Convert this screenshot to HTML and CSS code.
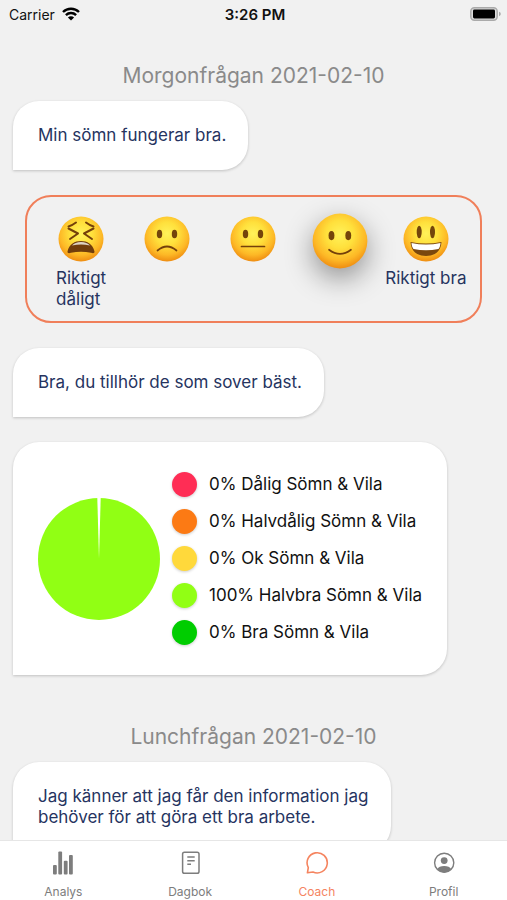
FILE: index.html
```html
<!DOCTYPE html>
<html lang="sv">
	<head>
		<meta charset="UTF-8">
		<meta name="viewport" content="width=device-width, initial-scale=1">
		<title>Coach</title>
		<link rel="stylesheet" href="styles.css">
	</head>
	<body>
		<!-- shared gradient for the faces -->
		<svg class="defs" width="0" height="0" aria-hidden="true">
			<defs>
				<radialGradient id="skin" cx="50%" cy="38%" r="63%">
					<stop offset="0" stop-color="#fff25a" />
					<stop offset=".4" stop-color="#ffe03c" />
					<stop offset=".75" stop-color="#fdb826" />
					<stop offset="1" stop-color="#ee8a10" />
				</radialGradient>
			</defs>
		</svg>
		<header class="status">
			<div class="carrier">
				<span>Carrier</span>
				<svg width="18" height="14" viewBox="0 0 18 14" fill="none" stroke="#000" stroke-width="2.4">
					<path d="M1 5A11.4 11.4 0 0 1 17 5" />
					<path d="M3.9 8.1A7.3 7.3 0 0 1 14.1 8.1" />
					<path d="M9 13.6L5.9 10.5A4.4 4.4 0 0 1 12.1 10.5Z" fill="#000" stroke="none" />
				</svg>
			</div>
			<time>3:26 PM</time>
			<svg class="battery" width="31" height="14" viewBox="0 0 31 14">
				<rect x=".8" y=".8" width="26.4" height="12.4" rx="3.6" fill="#ddd" stroke="#aaa" stroke-width="1.5" />
				<rect x="3" y="2.6" width="22" height="8.8" rx="1.4" fill="#000" />
				<path d="M29 4.8Q30.8 5.4 30.8 7T29 9.2Z" fill="#aaa" />
			</svg>
		</header>
		<main class="feed">
			<section class="group">
				<h2>Morgonfrågan 2021-02-10</h2>
				<p class="bubble">Min sömn fungerar bra.</p>
				<div class="scale">
					<button type="button">
						<svg class="face" viewBox="0 0 46 46">
							<circle cx="23" cy="23" r="22.5" fill="url(#skin)" />
							<g fill="none" stroke="#74400a" stroke-width="2" stroke-linecap="round" stroke-linejoin="round">
								<path d="M10.5 10.5Q14 9.5 18 6.5" />
								<path d="M35.5 10.5Q32 9.5 28 6.5" />
								<path d="M10.5 12.5L20 17.5L12 23" />
								<path d="M35.5 12.5L26 17.5L34 23" />
							</g>
							<path d="M9.5 35.5C11 28 17 25 23 25S35 28 36.5 35.5C36.7 37.4 35 37.4 33 36.8Q23 34.5 13 36.8C11 37.4 9.3 37.4 9.5 35.5Z" fill="#713d0c" />
							<path d="M14 29.5Q17 26 23 26T32 29.5Q23 27.5 14 29.5Z" fill="#ddd3c4" />
						</svg>
						<span>Riktigt<br>dåligt</span>
					</button>
					<button type="button" aria-label="Dåligt">
						<svg class="face" viewBox="0 0 46 46">
							<circle cx="23" cy="23" r="22.5" fill="url(#skin)" />
							<ellipse cx="15.5" cy="18" rx="2.7" ry="4.3" fill="#74450b" />
							<ellipse cx="30.5" cy="18" rx="2.7" ry="4.3" fill="#74450b" />
							<path d="M13.5 34.5Q23 26.5 32.5 34.5" fill="none" stroke="#74400a" stroke-width="1.7" stroke-linecap="round" />
						</svg>
					</button>
					<button type="button" aria-label="Ok">
						<svg class="face" viewBox="0 0 46 46">
							<circle cx="23" cy="23" r="22.5" fill="url(#skin)" />
							<ellipse cx="15.5" cy="18" rx="2.7" ry="4.3" fill="#74450b" />
							<ellipse cx="30.5" cy="18" rx="2.7" ry="4.3" fill="#74450b" />
							<path d="M11.5 30.5H34.5" fill="none" stroke="#74400a" stroke-width="1.7" stroke-linecap="round" />
						</svg>
					</button>
					<button type="button" class="selected" aria-label="Bra" aria-pressed="true">
						<svg class="face" viewBox="0 0 46 46">
							<circle cx="23" cy="23" r="22.5" fill="url(#skin)" />
							<ellipse cx="16" cy="18.5" rx="2.4" ry="3.8" fill="#74450b" />
							<ellipse cx="29.8" cy="18.5" rx="2.4" ry="3.8" fill="#74450b" />
							<path d="M14 30.2Q23 37 32 30.2" fill="none" stroke="#74400a" stroke-width="1.4" stroke-linecap="round" />
						</svg>
					</button>
					<button type="button">
						<svg class="face" viewBox="0 0 46 46">
							<circle cx="23" cy="23" r="22.5" fill="url(#skin)" />
							<ellipse cx="16.2" cy="16" rx="2.5" ry="6.3" fill="#74450b" />
							<ellipse cx="29.5" cy="16" rx="2.5" ry="6.3" fill="#74450b" />
							<path d="M7.5 26Q23 29 38.5 26C38 35 32 40 23 40S8 35 7.5 26Z" fill="#7b480e" />
							<path d="M8.5 27Q23 30 37.5 27C37.3 30 36.5 32 35.5 33Q23 35.5 10.5 33C9.3 31.5 8.7 30 8.5 27Z" fill="#fff" />
						</svg>
						<span>Riktigt bra</span>
					</button>
				</div>
				<p class="bubble">Bra, du tillhör de som sover bäst.</p>
				<div class="bubble chart">
					<svg class="pie" viewBox="0 0 122 122" role="img" aria-label="100% Halvbra Sömn &amp; Vila">
						<circle cx="61" cy="61" r="61" fill="#91ff14" />
						<path d="M59.3 0H62.7L61 61Z" fill="#fff" />
					</svg>
					<ul class="legend">
						<li><i class="dot bad"></i>0% Dålig Sömn &amp; Vila</li>
						<li><i class="dot poor"></i>0% Halvdålig Sömn &amp; Vila</li>
						<li><i class="dot ok"></i>0% Ok Sömn &amp; Vila</li>
						<li><i class="dot fair"></i>100% Halvbra Sömn &amp; Vila</li>
						<li><i class="dot good"></i>0% Bra Sömn &amp; Vila</li>
					</ul>
				</div>
			</section>
			<section class="group">
				<h2>Lunchfrågan 2021-02-10</h2>
				<p class="bubble">Jag känner att jag får den information jag behöver för att göra ett bra arbete.</p>
			</section>
		</main>
		<nav class="tabs">
			<a href="#analys">
				<svg viewBox="0 0 24 24" fill="currentColor">
					<rect x="2" y="14" width="3.8" height="9.5" rx="1" />
					<rect x="7.3" y=".5" width="3.8" height="23" rx="1" />
					<rect x="12.8" y="9.7" width="3.8" height="13.8" rx="1" />
					<rect x="18" y="4" width="3.8" height="19.5" rx="1" />
				</svg>
				Analys
			</a>
			<a href="#dagbok">
				<svg viewBox="0 0 24 24" fill="none" stroke="currentColor" stroke-width="1.5">
					<rect x="4.6" y="1.2" width="16.4" height="21" rx="1.8" />
					<path d="M9.3 6H16.7M9.3 9.7H16.7M9.3 13.3H13" />
				</svg>
				Dagbok
			</a>
			<a href="#coach" class="active">
				<svg viewBox="0 0 24 24" fill="none" stroke="currentColor" stroke-width="1.6" stroke-linejoin="round">
					<path d="M2.4 21.8L3.3 16.6A10.1 10.1 0 1 1 8 21Z" />
				</svg>
				Coach
			</a>
			<a href="#profil">
				<svg viewBox="0 0 24 24" fill="currentColor">
					<circle cx="12.2" cy="11.8" r="9.6" fill="none" stroke="currentColor" stroke-width="1.4" />
					<circle cx="12.2" cy="9.6" r="3.4" />
					<path d="M5.2 18Q7 15 12.2 15T19.2 18Q16.4 21.4 12.2 21.4T5.2 18Z" />
				</svg>
				Profil
			</a>
		</nav>
	</body>
</html>
```
FILE: styles.css
```css
*, *:before, *:after {
	box-sizing: border-box;
}
body {
	display: flex;
	flex-direction: column;
	height: 100vh;
	margin: 0;
	background: #f1f1f1;
	color: #26345f;
	font-family: Inter, "Liberation Sans", sans-serif;
	font-size: 17px;
	line-height: 21px;
}
h2, p, ul {
	margin: 0;
	padding: 0;
}
.defs {
	position: absolute;
}
.status {
	display: grid;
	grid-template-columns: 1fr auto 1fr;
	align-items: center;
	height: 28px;
	padding: 0 6px 0 9px;
	color: #111;
	font-size: 14px;
}
.carrier {
	display: flex;
	align-items: center;
	gap: 7px;
}
.status time {
	font-size: 15px;
	font-weight: 600;
}
.battery {
	justify-self: end;
}
.feed {
	flex: 1;
	min-height: 0;
	overflow: hidden;
	padding: 0 13px;
}
.group {
	display: flex;
	flex-direction: column;
	align-items: flex-start;
	gap: 25px;
	padding: 35px 0 14px;
}
.group h2 {
	align-self: center;
	margin-bottom: -13px;
	color: #8a8a8a;
	font-size: 21px;
	font-weight: 400;
	line-height: 26px;
}
.bubble {
	max-width: 378px;
	padding: 24px 22px 24px 25px;
	background: #fff;
	border-radius: 26px 26px 26px 0;
	box-shadow: 0 1px 3px rgba(0,0,0,.2);
}
.scale {
	align-self: stretch;
	display: grid;
	grid-template-columns: repeat(5, 1fr);
	margin: 0 12px;
	padding: 19px 11px 11px;
	border: 2px solid #f07f5a;
	border-radius: 26px;
}
.scale button {
	display: flex;
	flex-direction: column;
	align-items: center;
	gap: 6px;
	min-width: 0;
	padding: 0;
	border: 0;
	background: none;
	color: inherit;
	font: inherit;
	text-align: left;
	white-space: nowrap;
}
.face {
	width: 46px;
	height: 46px;
}
.selected .face {
	width: 56px;
	height: 56px;
	margin-top: -3px;
	filter: drop-shadow(0 10px 14px rgba(0,0,0,.4));
}
.chart {
	display: flex;
	align-items: center;
	gap: 12px;
	max-width: 100%;
	color: #111;
}
.pie {
	flex: none;
	width: 122px;
	height: 122px;
}
.legend {
	display: flex;
	flex-direction: column;
	gap: 12px;
	padding: 6px 3px 6px 0;
	list-style: none;
}
.legend li {
	display: flex;
	align-items: center;
	gap: 12px;
}
.dot {
	width: 25px;
	height: 25px;
	border-radius: 50%;
	box-shadow: 0 1px 3px rgba(0,0,0,.2);
}
.bad {
	background: #ff2d55;
}
.poor {
	background: #fc7a14;
}
.ok {
	background: #ffd93b;
}
.fair {
	background: #91ff14;
}
.good {
	background: #00cd00;
}
.tabs {
	display: grid;
	grid-template-columns: repeat(4, 1fr);
	height: 60px;
	padding-top: 10px;
	background: #fff;
	border-top: 1px solid #e6e6e6;
}
.tabs a {
	display: flex;
	flex-direction: column;
	align-items: center;
	gap: 9px;
	color: #7d7d7d;
	font-size: 12px;
	line-height: 16px;
	text-decoration: none;
}
.tabs svg {
	width: 24px;
	height: 24px;
}
.tabs .active {
	color: #f5845f;
}
```
